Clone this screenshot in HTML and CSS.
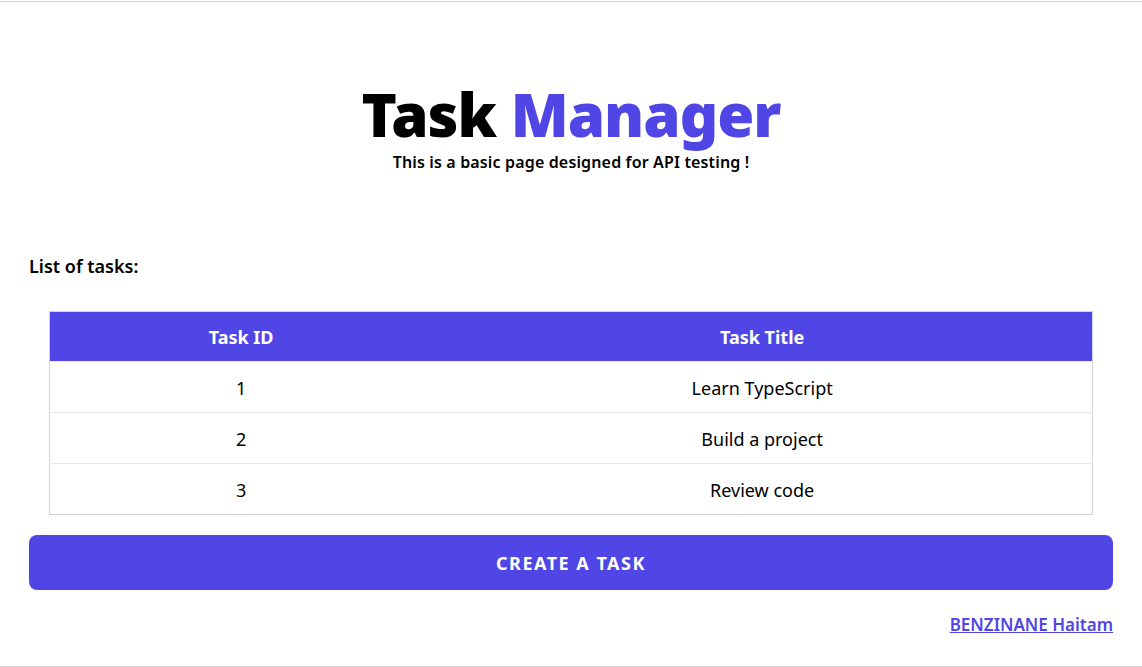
FILE: index.html
```html
<!DOCTYPE html>
<html lang="en">
<head>
<meta charset="utf-8">
<title>Task Manager</title>
<link rel="stylesheet" href="styles.css">
</head>
<body>
<div class="page">
  <header class="hero">
    <h1 class="title">Task <span class="accent">Manager</span></h1>
    <p class="subtitle">This is a basic page designed for API testing !</p>
  </header>
  <main class="content">
    <h2 class="list-label">List of tasks:</h2>
    <div class="table-wrap">
      <table class="tasks">
        <thead>
          <tr><th class="col-id">Task ID</th><th>Task Title</th></tr>
        </thead>
        <tbody>
          <tr><td>1</td><td>Learn TypeScript</td></tr>
          <tr><td>2</td><td>Build a project</td></tr>
          <tr><td>3</td><td>Review code</td></tr>
        </tbody>
      </table>
    </div>
    <button class="create-btn" type="button">CREATE A TASK</button>
    <div class="footer"><a class="author" href="#">BENZINANE Haitam</a></div>
  </main>
</div>
</body>
</html>
```
FILE: styles.css
```css
* { box-sizing: border-box; }
html, body { margin: 0; padding: 0; background: #fff; }
body {
  font-family: "Noto Sans", "Open Sans", sans-serif;
  color: #000;
}
.page {
  border-top: 1px solid #d4d4d8;
  border-bottom: 1px solid #d4d4d8;
  margin-top: 1px;
  height: 666px;
  display: flex;
  flex-direction: column;
}
.hero {
  text-align: center;
  padding-top: 78px;
}
.title {
  margin: 0;
  font-size: 60px;
  line-height: 68px;
  font-weight: 900;
  letter-spacing: -1px;
}
.accent { color: #4f46e5; }
.subtitle {
  margin: 2px 0 0;
  font-size: 16px;
  font-weight: 600;
  line-height: 24px;
  letter-spacing: 0.15px;
}
.content {
  padding: 0 29px;
  margin-top: 77px;
}
.list-label {
  margin: 0;
  padding-top: 1px;
  font-size: 18px;
  font-weight: 600;
  line-height: 28px;
}
.table-wrap {
  padding: 0 20px;
  margin-top: 31px;
}
.tasks {
  width: 100%;
  border-collapse: collapse;
  border: 1px solid #d1d5db;
  font-size: 18px;
}
.tasks th {
  background: #4f46e5;
  color: #fff;
  font-weight: 700;
  height: 50px;
  text-align: center;
}
.tasks .col-id { width: 36.7%; }
.tasks td {
  height: 51px;
  padding-top: 2px;
  text-align: center;
  border-top: 1px solid #e5e7eb;
}
.create-btn {
  display: block;
  width: 100%;
  margin-top: 20px;
  height: 55px;
  border: 0;
  border-radius: 8px;
  background: #4f46e5;
  color: #fff;
  font-family: inherit;
  font-size: 18px;
  font-weight: 700;
  letter-spacing: 1.5px;
}
.footer {
  text-align: right;
  margin-top: 23px;
}
.author {
  color: #4f46e5;
  font-weight: 600;
  font-size: 17px;
}
```
